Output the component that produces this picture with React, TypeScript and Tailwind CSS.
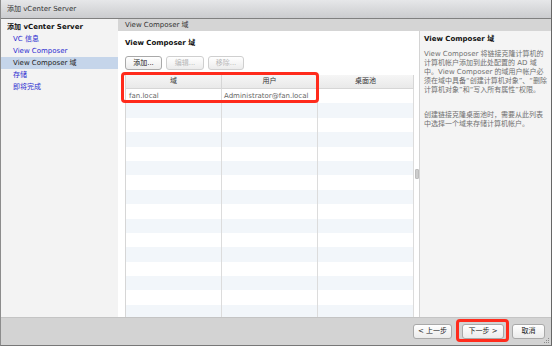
const navItems = [
  { label: "VC 信息", active: false },
  { label: "View Composer", active: false },
  { label: "View Composer 域", active: true },
  { label: "存储", active: false },
  { label: "即将完成", active: false },
];

const Btn = ({
  label,
  width,
  disabled,
}: {
  label: string;
  width: string;
  disabled?: boolean;
}) => {
  return (
    <div
      className={`${width} h-[14px] flex items-center justify-center rounded-[3px] border bg-gradient-to-b from-white to-[#ececec] leading-none ${
        disabled
          ? "border-[#cfcfcf] text-[#b8b8b8]"
          : "border-[#a9a9a9] text-[#222]"
      }`}
    >
      {label}
    </div>
  );
};

const TableRows = () => {
  const rows = Array.from({ length: 16 }, (_, i) => i);
  return (
    <>
      {rows.map((i) => (
        <div
          key={i}
          className={`flex h-[14.4px] ${i % 2 === 0 ? "bg-white" : "bg-[#f2f6fa]"}`}
        >
          <div className="w-[96px] border-r border-[#dcdcdc] pl-[3px] flex items-center text-[#666] whitespace-nowrap">
            {i === 0 ? "fan.local" : ""}
          </div>
          <div className="w-[96px] border-r border-[#dcdcdc] pl-[2px] flex items-center text-[#666] whitespace-nowrap">
            {i === 0 ? "Administrator@fan.local" : ""}
          </div>
          <div className="w-[96px] border-r border-[#dcdcdc]" />
        </div>
      ))}
    </>
  );
};

export default function App() {
  return (
    <div className="w-[553px] h-[347px] bg-white text-[7px] font-['DejaVu_Sans','Noto_Sans_CJK_SC',sans-serif]">
      <div className="relative w-[552px] h-[346px] border-x border-b border-l-[#8c8c8c] border-r-[#666] border-b-[#777] flex flex-col">
        {/* title bar */}
        <div className="h-[19px] shrink-0 flex items-center pl-[6px] bg-gradient-to-b from-[#e6e7e9] to-[#cbcccf] border-b border-[#808080] text-[#333]">
          添加 vCenter Server
        </div>

        <div className="flex h-[298px]">
          {/* nav */}
          <div className="w-[117px] shrink-0 bg-[#f3f3f3] pt-[2px]">
            <div className="h-[12px] flex items-center pl-[6px] font-bold text-[#111]">
              添加 vCenter Server
            </div>
            {navItems.map((item) => (
              <div
                key={item.label}
                className={`h-[12px] flex items-center pl-[12px] ${
                  item.active ? "bg-[#c5d5ea] text-[#222]" : "text-[#2b2bd0]"
                }`}
              >
                {item.label}
              </div>
            ))}
          </div>

          {/* main */}
          <div className="flex-1 flex flex-col">
            <div className="h-[12px] shrink-0 bg-[#d5d5d5] flex items-center pl-[7px] text-[#333]">
              View Composer 域
            </div>
            <div className="flex flex-1 min-h-0">
              <div className="w-[296px] bg-white pl-[7px] pt-[7px] flex flex-col">
                <div className="h-[10px] flex items-center font-bold text-[#111]">
                  View Composer 域
                </div>
                <div className="mt-[8px] flex gap-[4px] pl-[-1px]">
                  <Btn label="添加..." width="w-[37px]" />
                  <Btn label="编辑..." width="w-[38px]" disabled />
                  <Btn label="移除..." width="w-[36px]" disabled />
                </div>
                <div className="mt-[5px] flex-1 min-h-0 overflow-hidden w-[289px] border-l border-[#d6d6d6]">
                  <div className="flex h-[14px] bg-gradient-to-b from-[#f6f6f6] to-[#e9e9e9] border-b border-[#d6d6d6] text-[#333]">
                    <div className="w-[96px] border-r border-[#d6d6d6] flex items-center justify-center">
                      域
                    </div>
                    <div className="w-[96px] border-r border-[#d6d6d6] flex items-center justify-center">
                      用户
                    </div>
                    <div className="w-[96px] border-r border-[#d6d6d6] flex items-center justify-center">
                      桌面池
                    </div>
                  </div>
                  <TableRows />
                </div>
              </div>
              {/* splitter */}
              <div className="w-[5px] bg-white flex justify-center">
                <div className="mt-[138px] w-[4px] h-[10px] bg-[#cdcdcd] border border-[#bdbdbd] rounded-[1px]" />
              </div>
              {/* help panel */}
              <div className="flex-1 bg-[#f4f4f4] border-l border-[#d4d4d4] pl-[4px] pt-[3px] whitespace-nowrap">
                <div className="h-[10px] flex items-center font-bold text-[#111]">
                  View Composer 域
                </div>
                <p className="mt-[6px] leading-[9px] text-[#707070]">
                  View Composer 将链接克隆计算机的
                  <br />
                  计算机帐户添加到此处配置的 AD 域
                  <br />
                  中。View Composer 的域用户帐户必
                  <br />
                  须在域中具备“创建计算机对象”、“删除
                  <br />
                  计算机对象”和“写入所有属性”权限。
                </p>
                <p className="mt-[16px] leading-[9px] text-[#707070]">
                  创建链接克隆桌面池时，需要从此列表
                  <br />
                  中选择一个域来存储计算机帐户。
                </p>
              </div>
            </div>
          </div>
        </div>

        {/* bottom bar */}
        <div className="flex-1 bg-[#d3d3d3] border-t border-[#c4c4c4] flex items-center justify-end pr-[6px]">
          <div className="w-[39px] h-[15px] mr-[10px] flex items-center justify-center rounded-[3px] border border-[#a9a9a9] bg-gradient-to-b from-white to-[#ebebeb] text-[#222]">
            &lt; 上一步
          </div>
          <div className="w-[42px] h-[15px] mr-[8px] flex items-center justify-center rounded-[3px] border border-[#a9a9a9] bg-gradient-to-b from-white to-[#ebebeb] text-[#222]">
            下一步 &gt;
          </div>
          <div className="w-[33px] h-[15px] flex items-center justify-center rounded-[3px] border border-[#a9a9a9] bg-gradient-to-b from-white to-[#ebebeb] text-[#222]">
            取消
          </div>
        </div>

        {/* resize grip */}
        <svg
          className="absolute right-[1px] bottom-[1px]"
          width="6"
          height="6"
          viewBox="0 0 6 6"
        >
          <rect x="4" y="0" width="1" height="1" fill="#8a8a8a" />
          <rect x="2" y="2" width="1" height="1" fill="#8a8a8a" />
          <rect x="4" y="2" width="1" height="1" fill="#8a8a8a" />
          <rect x="0" y="4" width="1" height="1" fill="#8a8a8a" />
          <rect x="2" y="4" width="1" height="1" fill="#8a8a8a" />
          <rect x="4" y="4" width="1" height="1" fill="#8a8a8a" />
        </svg>

        {/* highlight boxes */}
        <div className="absolute left-[120px] top-[72px] w-[198px] h-[31px] border-[3px] border-[#ff2b1c] rounded-[4px]" />
        <div className="absolute left-[455px] top-[319px] w-[53px] h-[23px] border-[3px] border-[#ff2b1c] rounded-[4px]" />
      </div>
    </div>
  );
}
